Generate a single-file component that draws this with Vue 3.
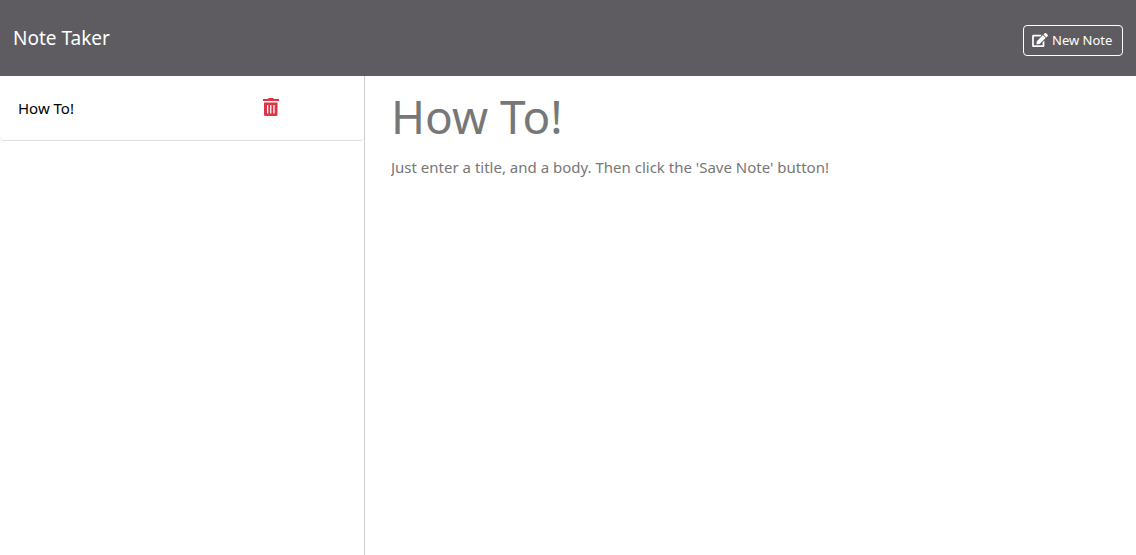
<script setup>
import { ref } from 'vue'

const notes = ref([
  {
    id: 1,
    title: 'How To!',
    text: "Just enter a title, and a body. Then click the 'Save Note' button!",
  },
])
const active = ref({ ...notes.value[0] })
const readOnly = ref(true)

function openNote(note) {
  active.value = { ...note }
  readOnly.value = true
}

function newNote() {
  active.value = { title: '', text: '' }
  readOnly.value = false
}

function removeNote(id) {
  notes.value = notes.value.filter((note) => note.id !== id)
}
</script>

<template>
  <div class="app">
    <header class="navbar">
      <a class="brand" href="#">Note Taker</a>
      <button class="new-note" type="button" @click="newNote">
        <svg class="edit-icon" viewBox="0 0 576 512" aria-hidden="true">
          <path d="M402.6 83.2l90.2 90.2c3.8 3.8 3.8 10 0 13.8L274.4 405.6l-92.8 10.3c-12.4 1.4-22.9-9.1-21.5-21.5l10.3-92.8L388.8 83.2c3.8-3.8 10-3.8 13.8 0zm162-22.9l-48.8-48.8c-15.2-15.2-39.9-15.2-55.2 0l-35.4 35.4c-3.8 3.8-3.8 10 0 13.8l90.2 90.2c3.8 3.8 10 3.8 13.8 0l35.4-35.4c15.2-15.3 15.2-40 0-55.2zM384 346.2V448H64V128h229.8c3.2 0 6.2-1.3 8.5-3.5l40-40c7.6-7.6 2.2-20.5-8.5-20.5H48C21.5 64 0 85.5 0 112v352c0 26.5 21.5 48 48 48h352c26.5 0 48-21.5 48-48V306.2c0-10.7-12.9-16-20.5-8.5l-40 40c-2.2 2.3-3.5 5.3-3.5 8.5z" />
        </svg>
        <span>New Note</span>
      </button>
    </header>
    <div class="content">
      <aside class="sidebar">
        <ul class="notes">
          <li v-for="note in notes" :key="note.id" class="note">
            <button class="note-title" type="button" @click="openNote(note)">{{ note.title }}</button>
            <button class="delete" type="button" aria-label="Delete note" @click="removeNote(note.id)">
              <svg class="trash-icon" viewBox="0 0 16 18" aria-hidden="true">
                <path fill-rule="evenodd" d="M0 1.5Q0 1 .5 1H5Q5.300 0 6 0h4q.7 0 1 1h4.500q.5 0 .5.500V3H0zM1 4.500h13.500v12q0 1.500-1.500 1.500H2.500Q1 18 1 16.500zM4 7v8.500h1.300V7zm3.100 0v8.500h1.300V7zm3.200 0v8.500h1.300V7z" />
              </svg>
            </button>
          </li>
        </ul>
      </aside>
      <main class="editor">
        <input v-model="active.title" class="title-field" type="text" aria-label="Note title" :readonly="readOnly" />
        <textarea v-model="active.text" class="text-field" aria-label="Note text" :readonly="readOnly"></textarea>
      </main>
    </div>
  </div>
</template>

<style>
body {
  background: #fff;
}
</style>

<style scoped>
.app {
  display: flex;
  flex-direction: column;
  min-height: 100vh;
  font-family: "Segoe UI", "Noto Sans", "Open Sans", sans-serif;
  font-size: 15px;
  line-height: 24px;
}

.app *,
.app {
  box-sizing: border-box;
}

button,
input,
textarea {
  margin: 0;
  padding: 0;
  border: 0;
  background: none;
  font-family: inherit;
}

.navbar {
  display: flex;
  align-items: center;
  justify-content: space-between;
  padding: 20px 13px 16px;
  min-height: 76px;
  background: #5e5c61;
}

.brand {
  color: #fff;
  font-size: 19px;
  line-height: 32px;
  padding-bottom: 4px;
  text-decoration: none;
}

.new-note {
  display: flex;
  align-items: center;
  gap: 4px;
  min-width: 100px;
  padding: 4px 8px;
  border: 1px solid #fff;
  border-radius: 4px;
  color: #fff;
  font-size: 13px;
  line-height: 21px;
}

.edit-icon {
  width: 16px;
  height: 14px;
  fill: currentColor;
}

.content {
  display: flex;
  flex: 1;
}

.sidebar {
  flex: 0 0 365px;
  border-right: 1px solid #ccc;
}

.notes {
  margin: 0;
  padding: 0;
  list-style: none;
}

.note {
  display: grid;
  grid-template-columns: 1fr 101px;
  align-items: start;
  padding: 20px 0 20px 18px;
  border-bottom: 1px solid #dfdfdf;
  border-radius: 4px;
}

.note-title {
  color: #000;
  font-size: 15px;
  line-height: 24px;
  text-align: left;
}

.delete {
  justify-self: start;
  display: flex;
  padding: 2px 0;
  color: #dc3545;
}

.trash-icon {
  width: 16px;
  height: 18px;
  fill: currentColor;
}

.editor {
  display: flex;
  flex: 1;
  flex-direction: column;
  min-width: 0;
  padding: 10px 24px 0 26px;
}

.title-field,
.text-field {
  width: 100%;
  color: #777;
  outline: none;
}

.title-field {
  font-size: 46px;
  line-height: 58px;
  height: 60px;
}

.text-field {
  flex: 1;
  margin-top: 9px;
  font-size: 15px;
  line-height: 24px;
  resize: none;
}
</style>
